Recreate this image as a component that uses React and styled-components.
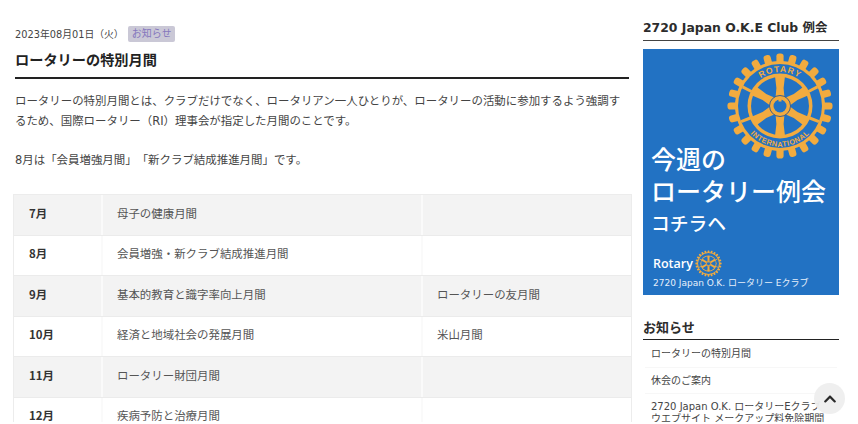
import React from 'react';
import styled, { createGlobalStyle } from 'styled-components';
import { FaChevronUp } from 'react-icons/fa';

const GlobalStyle = createGlobalStyle`
  html, body {
    margin: 0;
    padding: 0;
    background: #fff;
  }
  body {
    font-family: "DejaVu Sans", "Noto Sans CJK JP", sans-serif;
    color: #333;
    text-spacing-trim: space-all;
  }
`;

const Page = styled.div`
  position: relative;
  width: 858px;
  height: 422px;
  overflow: hidden;
  display: flex;
  gap: 14px;
  padding-left: 15px;
  box-sizing: border-box;
`;

const Main = styled.main`
  width: 614px;
  flex: none;
  padding-top: 25px;
`;

const Meta = styled.div`
  display: flex;
  align-items: center;
  height: 17px;
  font-size: 9.8px;
  color: #444;
`;

const Badge = styled.span`
  margin-left: 4px;
  height: 16px;
  line-height: 16px;
  padding: 0 4px;
  background: #cac8d6;
  border-radius: 2px;
  color: #8577bd;
  font-size: 10px;
`;

const Title = styled.h1`
  margin: 7px 0 0;
  padding-bottom: 8px;
  font-family: "Noto Sans CJK JP", sans-serif;
  font-size: 14.2px;
  line-height: 20px;
  font-weight: 700;
  color: #222;
  border-bottom: 2px solid #222;
`;

const Body = styled.p`
  margin: 13px 0 0;
  font-size: 11.45px;
  line-height: 19.5px;
  color: #444;
  white-space: pre-line;
`;

const Table = styled.div`
  margin: 24px -3px 0 -2px;
  border: 1px solid #ececec;
  border-bottom: none;
`;

const Row = styled.div`
  display: grid;
  grid-template-columns: 87px 320px 1fr;
  height: 40.5px;
  border-bottom: 1px solid #ebebeb;
  box-sizing: border-box;
  background: ${p => (p.$shaded ? '#f3f3f3' : '#fff')};
`;

const Cell = styled.div`
  display: flex;
  align-items: center;
  padding: 0 0 4px ${p => (p.$first ? 15 : 14)}px;
  font-size: 11.45px;
  color: #555;
  border-left: ${p => (p.$first ? 'none' : '2px solid #fafafa')};
`;

const Month = styled(Cell)`
  font-family: "Noto Sans CJK JP", sans-serif;
  font-weight: 700;
  color: #333;
`;

const Side = styled.aside`
  width: 196px;
  flex: none;
  padding-top: 18px;
`;

const SideHeading = styled.h2`
  margin: 0;
  padding-bottom: 3px;
  font-size: 12.4px;
  line-height: 19px;
  font-weight: 700;
  color: #2c2c2c;
  border-bottom: 1px solid #444;
  white-space: nowrap;
`;

const Banner = styled.div`
  position: relative;
  margin-top: 8px;
  height: 246px;
  background: #2272c3;
  color: #fff;
  box-sizing: border-box;
  padding: 93px 0 0 8px;
  font-family: "Noto Sans CJK JP", sans-serif;
`;

const WheelSlot = styled.div`
  position: absolute;
  top: 3px;
  right: 5px;
  line-height: 0;
`;

const BannerLarge = styled.div`
  font-size: 25px;
  line-height: 32px;
  font-weight: 500;
  white-space: nowrap;
`;

const BannerMid = styled.div`
  margin-top: 5px;
  font-size: 18.8px;
  line-height: 24px;
  font-weight: 500;
`;

const BannerBrand = styled.div`
  display: flex;
  align-items: center;
  gap: 2px;
  margin: 15px 0 0 2px;
  font-family: "Open Sans", sans-serif;
  font-size: 12.5px;
  font-weight: 600;
  line-height: 26px;
`;

const BannerFoot = styled.div`
  margin: -1px 0 0 2px;
  font-family: "DejaVu Sans", "Noto Sans CJK JP", sans-serif;
  font-size: 9px;
  line-height: 14px;
  white-space: nowrap;
  color: #e6effa;
`;

const NewsHeading = styled(SideHeading)`
  margin-top: 22px;
  padding-bottom: 3px;
  font-family: "Noto Sans CJK JP", sans-serif;
  font-size: 13px;
  border-bottom: 1px solid #222;
`;

const NewsList = styled.ul`
  list-style: none;
  margin: 0;
  padding: 1px 0 0;
`;

const NewsItem = styled.li`
  margin: 0 2px;
  padding: 7px 6px;
  font-size: 10px;
  line-height: 11.5px;
  color: #444;
  border-bottom: 1px solid #f7f7f7;
  white-space: nowrap;
`;

const TopButton = styled.button`
  position: absolute;
  left: 814px;
  top: 383px;
  width: 31px;
  height: 31px;
  padding: 0;
  border: none;
  border-radius: 50%;
  background: rgba(238, 238, 238, 0.95);
  color: #2a2a2a;
  display: flex;
  align-items: center;
  justify-content: center;
  font-size: 14px;
`;

const months = [
  ['7月', '母子の健康月間', ''],
  ['8月', '会員増強・新クラブ結成推進月間', ''],
  ['9月', '基本的教育と識字率向上月間', 'ロータリーの友月間'],
  ['10月', '経済と地域社会の発展月間', '米山月間'],
  ['11月', 'ロータリー財団月間', ''],
  ['12月', '疾病予防と治療月間', ''],
];

const GOLD = '#f2ab3f';
const BLUE = '#2272c3';

// Rotary wheel, used large on the banner and small next to the brand name
const Wheel = ({ size, detail }) => {
  const teeth = Array.from({ length: 24 }, (_, i) => i * 15);
  const spokes = [0, 60, 120, 180, 240, 300];
  const ticks = [-63, 63, -112, 112];
  return (
    <svg width={size} height={size} viewBox="-54 -54 108 108">
      {teeth.map(a => (
        <rect key={a} x="-3.6" y="-52.5" width="7.2" height="12" rx="2.8" fill={GOLD} transform={`rotate(${a})`} />
      ))}
      <circle r="45" fill={GOLD} />
      <circle r="42" fill={BLUE} />
      <circle r="32.5" fill={GOLD} />
      <circle r="29" fill={BLUE} />
      {ticks.map(a => (
        <rect key={a} x="-1.5" y="-42" width="3" height="10" fill={GOLD} transform={`rotate(${a})`} />
      ))}
      {spokes.map(a => (
        <path key={a} d="M-4.5 -8 L-3.6 -18 L-5 -30 L5 -30 L3.6 -18 L4.5 -8 Z" fill={GOLD} transform={`rotate(${a})`} />
      ))}
      <circle r="10.5" fill={GOLD} stroke="#3a5f8c" strokeWidth="1" />
      <circle r="6.5" fill={BLUE} />
      <rect x="-1.5" y="-7.5" width="3" height="3" fill={GOLD} />
      {detail && (
        <>
          <path id="wheelTop" d="M-34 0 A34 34 0 0 1 34 0" fill="none" />
          <path id="wheelBottom" d="M-40.5 0 A40.5 40.5 0 0 0 40.5 0" fill="none" />
          <text fontSize="8.6" fontWeight="700" fill={GOLD} fontFamily="Liberation Sans, sans-serif" letterSpacing="1">
            <textPath href="#wheelTop" startOffset="50%" textAnchor="middle">ROTARY</textPath>
          </text>
          <text fontSize="7.4" fontWeight="700" fill={GOLD} fontFamily="Liberation Sans, sans-serif" letterSpacing="0.5">
            <textPath href="#wheelBottom" startOffset="50%" textAnchor="middle">INTERNATIONAL</textPath>
          </text>
        </>
      )}
    </svg>
  );
};

const App = () => (
  <>
    <GlobalStyle />
    <Page>
      <Main>
        <Meta>
          2023年08月01日（火）
          <Badge>お知らせ</Badge>
        </Meta>
        <Title>ロータリーの特別月間</Title>
        <Body>
          {'ロータリーの特別月間とは、クラブだけでなく、ロータリアン一人ひとりが、ロータリーの活動に参加するよう強調するため、国際ロータリー（RI）理事会が指定した月間のことです。\n\n8月は「会員増強月間」「新クラブ結成推進月間」です。'}
        </Body>
        <Table>
          {months.map(([month, first, second], i) => (
            <Row key={month} $shaded={i % 2 === 0}>
              <Month $first>{month}</Month>
              <Cell>{first}</Cell>
              <Cell>{second}</Cell>
            </Row>
          ))}
        </Table>
      </Main>
      <Side>
        <SideHeading>2720 Japan O.K.E Club 例会</SideHeading>
        <Banner>
          <WheelSlot>
            <Wheel size={108} detail />
          </WheelSlot>
          <BannerLarge>今週の</BannerLarge>
          <BannerLarge>ロータリー例会</BannerLarge>
          <BannerMid>コチラヘ</BannerMid>
          <BannerBrand>
            Rotary
            <Wheel size={27} />
          </BannerBrand>
          <BannerFoot>2720 Japan O.K. ロータリー Eクラブ</BannerFoot>
        </Banner>
        <NewsHeading>お知らせ</NewsHeading>
        <NewsList>
          <NewsItem>ロータリーの特別月間</NewsItem>
          <NewsItem>休会のご案内</NewsItem>
          <NewsItem>
            2720 Japan O.K. ロータリーEクラブ
            <br />
            ウエブサイト メークアップ料免除期間
          </NewsItem>
        </NewsList>
      </Side>
      <TopButton aria-label="ページトップへ">
        <FaChevronUp />
      </TopButton>
    </Page>
  </>
);

export default App;
